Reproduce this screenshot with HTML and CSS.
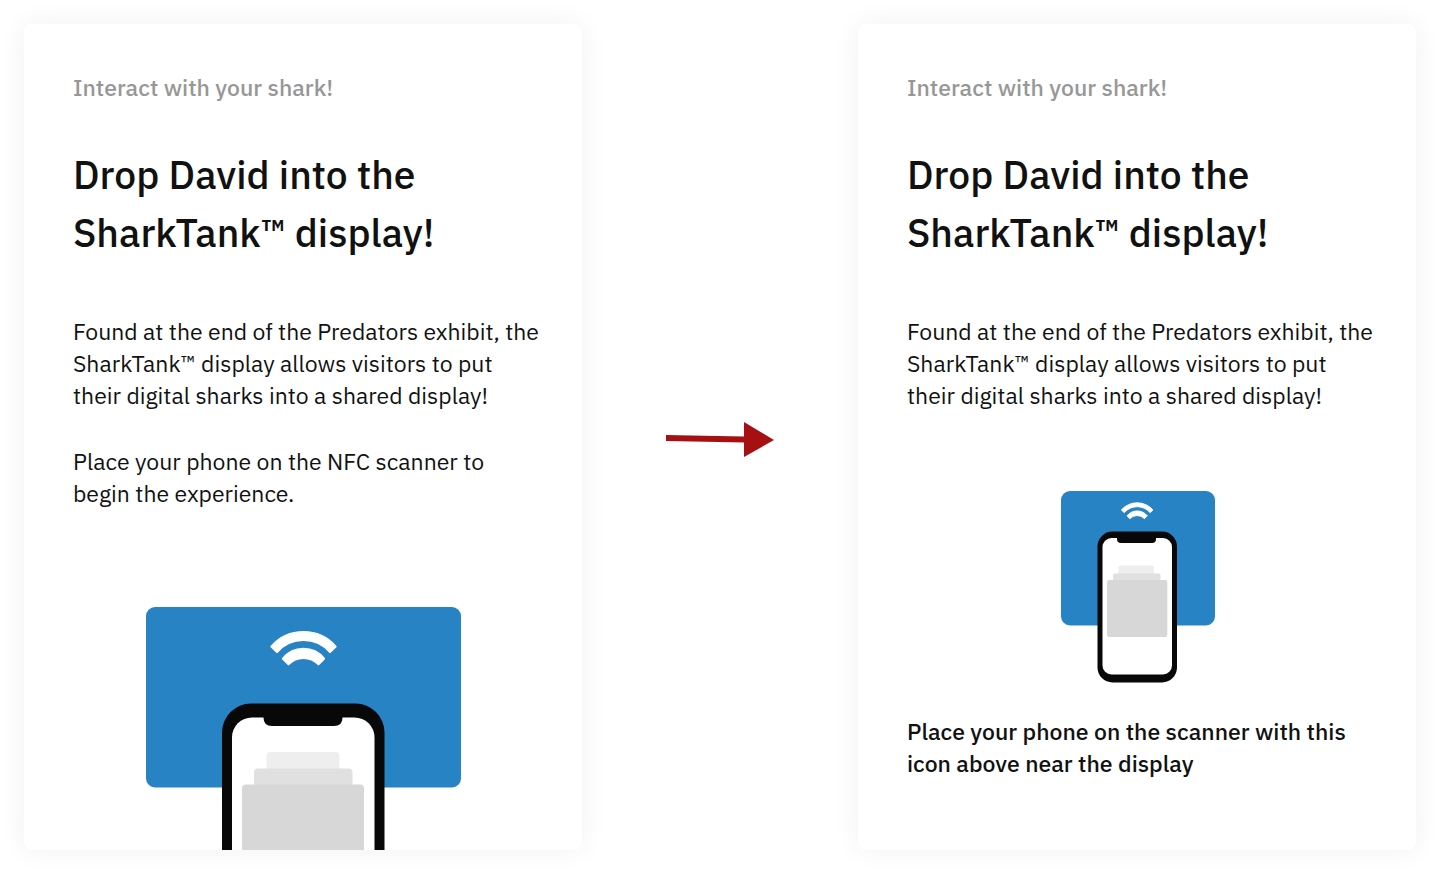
FILE: index.html
```html
<!DOCTYPE html>
<html lang="en">
<head>
<meta charset="utf-8">
<meta name="viewport" content="width=device-width, initial-scale=1">
<title>Interact with your shark!</title>
<link rel="stylesheet" href="styles.css">
</head>
<body>
<main class="comparison">
  <article class="card card-before">
    <p class="eyebrow">Interact with your shark!</p>
    <h2 class="title">Drop David into the<br>SharkTank™ display!</h2>
    <div class="copy">
      <p>Found at the end of the Predators exhibit, the<br>SharkTank™ display allows visitors to put<br>their digital sharks into a shared display!</p>
      <p>Place your phone on the NFC scanner to<br>begin the experience.</p>
    </div>
    <svg class="art art-large" viewBox="0 0 315 243" width="315" height="243" role="img" aria-label="Phone on a scanner">
      <rect width="315" height="180.500" rx="9" fill="#2883c5"/>
      <g id="signal" fill="#fff" stroke="#fff" stroke-width="2" stroke-linejoin="round">
        <path d="M125.300 39.600A43 43 0 0 1 189.700 39.600L184 45.100A35 35 0 0 0 131 45.100Z"/>
        <path d="M136.900 51.700A26.300 26.300 0 0 1 178.100 51.700L172.500 57.400A21 21 0 0 0 142.500 57.400Z"/>
      </g>
      <rect x="76" y="96.500" width="162.500" height="200" rx="29" fill="#080808"/>
      <rect x="86" y="110.500" width="142.500" height="180" rx="20" fill="#fff"/>
      <path d="M117.500 109H196.500V110.500Q196.500 119 188 119H126Q117.500 119 117.500 110.500Z" fill="#080808"/>
      <rect x="120.500" y="145" width="73" height="30" rx="4" fill="#eee"/>
      <rect x="108" y="161.500" width="98.500" height="30" rx="4" fill="#e0e0e0"/>
      <rect x="96" y="177.500" width="122" height="90" rx="4" fill="#d7d7d7"/>
    </svg>
  </article>

  <svg class="arrow" viewBox="0 0 108 35" width="108" height="35" role="img" aria-label="becomes">
    <path d="M0 13L78 14.500V0L108 18L78 35V20.500L0 19Z" fill="#a61013"/>
  </svg>

  <article class="card">
    <p class="eyebrow">Interact with your shark!</p>
    <h2 class="title">Drop David into the<br>SharkTank™ display!</h2>
    <div class="copy">
      <p>Found at the end of the Predators exhibit, the<br>SharkTank™ display allows visitors to put<br>their digital sharks into a shared display!</p>
    </div>
    <svg class="art art-small" viewBox="0 0 154 192" width="154" height="192" role="img" aria-label="Phone on a scanner with a signal icon">
      <rect width="154" height="134.500" rx="9" fill="#2883c5"/>
      <use href="#signal" transform="translate(-1 -.5) scale(.49)"/>
      <rect x="36.500" y="40.500" width="79.500" height="151" rx="15" fill="#080808"/>
      <rect x="41.500" y="47" width="69.500" height="136.500" rx="9" fill="#fff"/>
      <path d="M56 46H95V48Q95 52 91 52H60Q56 52 56 48Z" fill="#080808"/>
      <rect x="57.500" y="74.500" width="35.500" height="15" rx="2" fill="#eee"/>
      <rect x="52" y="82.500" width="47.500" height="15" rx="2" fill="#e0e0e0"/>
      <rect x="46" y="89" width="60.300" height="57" rx="2" fill="#d7d7d7"/>
    </svg>
    <p class="callout">Place your phone on the scanner with this<br>icon above near the display</p>
  </article>
</main>
</body>
</html>
```
FILE: styles.css
```css
* {
  box-sizing: border-box;
}

body {
  margin: 0;
  background: #fff;
  color: #111;
  font-family: "IBM Plex Sans", Roboto, sans-serif;
}

.comparison {
  display: grid;
  grid-template-columns: 1fr auto 1fr;
  column-gap: 84px;
  min-height: 100vh;
  padding: 24px 26px 24px 24px;
}

.card {
  display: flex;
  flex-direction: column;
  padding: 47px 0 70px 49px;
  border-radius: 8px;
  background: #fff;
  box-shadow: 0 0 28px rgba(0, 0, 0, 0.06);
}

.card-before {
  padding-bottom: 0;
}

.eyebrow,
.title,
.copy p,
.callout {
  margin: 0;
  white-space: nowrap;
}

.eyebrow {
  color: #979797;
  font-size: 23px;
  font-weight: 500;
  line-height: 32px;
}

.title {
  margin-top: 43px;
  font-size: 39px;
  font-weight: 500;
  line-height: 58px;
}

.copy {
  display: grid;
  gap: 34px;
  margin-top: 53px;
  font-size: 23px;
  line-height: 32px;
}

.art {
  display: block;
  margin-left: -48px;
  align-self: center;
}

.art-large {
  margin-top: auto;
}

.art-small {
  margin-top: 80px;
}

.arrow {
  align-self: center;
  margin-top: 4px;
}

.callout {
  margin-top: 32px;
  font-size: 23px;
  font-weight: 500;
  line-height: 32px;
}
```
